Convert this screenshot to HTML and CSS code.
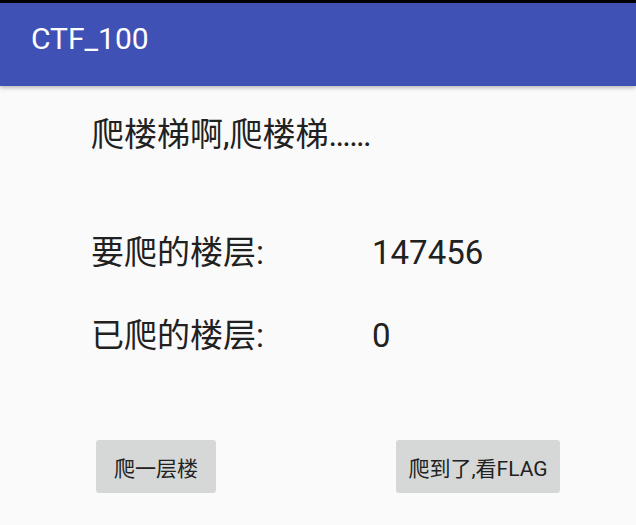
FILE: index.html
```html
<!DOCTYPE html>
<html lang="zh">
<head>
<meta charset="utf-8">
<title>CTF_100</title>
<link rel="stylesheet" href="styles.css">
</head>
<body>
<div class="status"></div>
<header class="appbar"><span class="title">CTF_100</span></header>
<main class="content">
  <p class="heading">爬楼梯啊,爬楼梯<span class="dots">......</span></p>
  <div class="rows">
    <span class="label">要爬的楼层:</span><span class="value">147456</span>
    <span class="label">已爬的楼层:</span><span class="value">0</span>
  </div>
  <div class="actions">
    <button class="btn btn-one">爬一层楼</button>
    <button class="btn btn-flag">爬到了,看FLAG</button>
  </div>
</main>
</body>
</html>
```
FILE: styles.css
```css
html, body {
  margin: 0;
  padding: 0;
  background: #fafafa;
  font-family: Roboto, "Noto Sans CJK SC", sans-serif;
  color: #212121;
  height: 525px;
  overflow: hidden;
}
.status {
  height: 3px;
  background: #000;
}
.appbar {
  position: relative;
  z-index: 1;
  height: 83px;
  box-sizing: border-box;
  background: #3f51b5;
  padding: 21px 0 0 31px;
  box-shadow: 0 1px 5px rgba(0, 0, 0, 0.35);
}
.title {
  display: block;
  color: #fff;
  font-size: 30px;
  line-height: 30px;
}
.content {
  padding: 29px 0 0 91px;
}
.heading {
  margin: 0;
  font-size: 33px;
  line-height: 40px;
}
.dots {
  letter-spacing: -1.8px;
}
.rows {
  display: grid;
  grid-template-columns: 281px auto;
  row-gap: 43px;
  margin-top: 78px;
  font-size: 33px;
  line-height: 40px;
}
.actions {
  display: flex;
  gap: 180px;
  margin-top: 84px;
  padding-left: 5px;
}
.btn {
  height: 53px;
  border: none;
  border-radius: 3px;
  background: #d6d7d7;
  color: #212121;
  font-family: Roboto, "Noto Sans CJK SC", sans-serif;
  font-size: 21px;
  padding: 0;
  text-align: center;
}
.btn-one { width: 120px; }
.btn-flag { width: 164px; }
```
